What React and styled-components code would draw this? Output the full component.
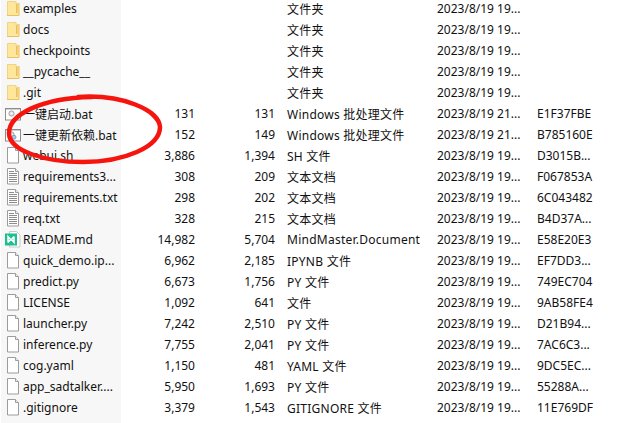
import React from 'react';
import styled, { createGlobalStyle } from 'styled-components';

const Global = createGlobalStyle`
  html, body { margin: 0; padding: 0; background: #fff; }
  body { width: 643px; height: 423px; overflow: hidden; }
`;

const Page = styled.div`
  position: relative;
  width: 643px;
  height: 423px;
  overflow: hidden;
  background: #fff;
  font-family: "Noto Sans", "Noto Sans CJK SC", sans-serif;
  font-size: 12px;
  color: #111;
`;

const List = styled.div`
  display: flex;
  flex-direction: column;
  margin-top: -2px;
`;

const Row = styled.div`
  display: grid;
  grid-template-columns: 120px 74px 80px 162px 100px 1fr;
  height: 21px;
  align-items: center;
  margin-left: 1px;
`;

const NameCell = styled.div`
  display: flex;
  align-items: center;
  height: 100%;
  padding-left: 4px;
  background: #f7f7f7;
  white-space: nowrap;
  overflow: hidden;
`;

const IconBox = styled.span`
  flex: 0 0 18px;
  width: 18px;
  height: 17px;
  display: block;
`;

const Num = styled.div`
  text-align: right;
`;

const Type = styled.div`
  padding-left: 12px;
  white-space: nowrap;
  letter-spacing: 0.25px;
`;

const DateCell = styled.div`
  white-space: nowrap;
`;

const Crc = styled.div`
  white-space: nowrap;
`;

const Ellipse = styled.svg`
  position: absolute;
  left: 0;
  top: 85px;
`;

const Glyph = styled.svg`
  display: block;
`;

const FolderIcon = () => (
  <Glyph width="18" height="17" viewBox="0 0 18 17">
    <path d="M2 1.5h9l1 1.5h2v13H2z" fill="#fee79a" />
    <path d="M2.5 1.5h8.5v2.5M2.5 1.5v14" fill="none" stroke="#efd486" />
    <path d="M2 15.5h12V3M11.5 4v9" fill="none" stroke="#e6c165" />
    <path d="M12 3h1.5v10H12z" fill="#f7cf6c" />
  </Glyph>
);

const PageIcon = () => (
  <Glyph width="18" height="17" viewBox="0 0 18 17">
    <path d="M2.5 0.5h8l3 3v12.5h-11z" fill="#fff" stroke="#9c9c9c" />
    <path d="M10.5 0.5v3h3" fill="#f0f0f0" stroke="#9c9c9c" />
  </Glyph>
);

const TextIcon = () => (
  <Glyph width="18" height="17" viewBox="0 0 18 17">
    <path d="M2.5 0.5h8l3 3v12.5h-11z" fill="#fff" stroke="#9c9c9c" />
    <path d="M10.5 0.5v3h3" fill="#f0f0f0" stroke="#9c9c9c" />
    <path d="M4 3.5h5M4 5.5h8M4 7.5h8M4 9.5h8M4 11.5h8M4 13.5h8" stroke="#8c8c8c" />
  </Glyph>
);

const BatIcon = ({ blue }) => (
  <Glyph width="18" height="17" viewBox="0 0 18 17">
    <rect x="0.5" y="3.5" width="15" height="11.5" fill="#fff" stroke="#8c8c8c" />
    <path d="M1 4h14v1H1z" fill="#d0d0d0" />
    <circle cx="6.5" cy="8.5" r="2.6" fill="#e2e2e2" stroke="#a2a2a2" />
    <circle cx="6.5" cy="8.5" r="0.9" fill="#fff" />
    {blue && <circle cx="9" cy="11.2" r="2" fill="#a9c8e4" stroke="#7f9fbd" />}
  </Glyph>
);

const BatBlueIcon = () => <BatIcon blue />;

const MindIcon = () => (
  <Glyph width="18" height="17" viewBox="0 0 18 17">
    <path d="M4.5 0.5h7l3.5 3.5v12h-10.5z" fill="#fff" stroke="#c8c8c8" />
    <rect x="0" y="2.5" width="12" height="12" fill="#1cbf8f" />
    <path d="M3 11.5V5.5l2.6 3L3 11.5M9 5.5v6L6.4 8.5 9 5.5" fill="none" stroke="#fff" strokeWidth="1.5" />
  </Glyph>
);

const icons = { folder: FolderIcon, page: PageIcon, text: TextIcon, bat: BatIcon, batBlue: BatBlueIcon, mind: MindIcon };

const d19 = '2023/8/19 19...';
const d21 = '2023/8/19 21...';
const rows = [
  ['folder', 'examples', '', '', '文件夹', d19, ''],
  ['folder', 'docs', '', '', '文件夹', d19, ''],
  ['folder', 'checkpoints', '', '', '文件夹', d19, ''],
  ['folder', '__pycache__', '', '', '文件夹', d19, ''],
  ['folder', '.git', '', '', '文件夹', d19, ''],
  ['bat', '一键启动.bat', '131', '131', 'Windows 批处理文件', d21, 'E1F37FBE'],
  ['batBlue', '一键更新依赖.bat', '152', '149', 'Windows 批处理文件', d21, 'B785160E'],
  ['page', 'webui.sh', '3,886', '1,394', 'SH 文件', d19, 'D3015B...'],
  ['text', 'requirements3...', '308', '209', '文本文档', d19, 'F067853A'],
  ['text', 'requirements.txt', '298', '202', '文本文档', d19, '6C043482'],
  ['text', 'req.txt', '328', '215', '文本文档', d19, 'B4D37A...'],
  ['mind', 'README.md', '14,982', '5,704', 'MindMaster.Document', d19, 'E58E20E3'],
  ['page', 'quick_demo.ip...', '6,962', '2,185', 'IPYNB 文件', d19, 'EF7DD3...'],
  ['page', 'predict.py', '6,673', '1,756', 'PY 文件', d19, '749EC704'],
  ['page', 'LICENSE', '1,092', '641', '文件', d19, '9AB58FE4'],
  ['page', 'launcher.py', '7,242', '2,510', 'PY 文件', d19, 'D21B94...'],
  ['page', 'inference.py', '7,755', '2,041', 'PY 文件', d19, '7AC6C3...'],
  ['page', 'cog.yaml', '1,150', '481', 'YAML 文件', d19, '9DC5EC...'],
  ['page', 'app_sadtalker....', '5,950', '1,693', 'PY 文件', d19, '55288A...'],
  ['page', '.gitignore', '3,379', '1,543', 'GITIGNORE 文件', d19, '11E769DF'],
];

export default function App() {
  return (
    <Page>
      <Global />
      <List>
        {rows.map(([icon, name, size, packed, type, date, crc]) => {
          const Icon = icons[icon];
          return (
            <Row key={name}>
              <NameCell>
                <IconBox><Icon /></IconBox>
                {name}
              </NameCell>
              <Num>{size}</Num>
              <Num>{packed}</Num>
              <Type>{type}</Type>
              <DateCell>{date}</DateCell>
              <Crc>{crc}</Crc>
            </Row>
          );
        })}
        <Row>
          <NameCell />
        </Row>
      </List>
      <Ellipse width="180" height="85" viewBox="0 0 180 85">
        <path d="M78 12C122 9 159 25 160 42C160 62 124 77 83 77C45 77 9 66 9 48C9 30 40 13 92 12" fill="none" stroke="#f5140e" strokeWidth="4.5" strokeLinecap="round" />
      </Ellipse>
    </Page>
  );
}
